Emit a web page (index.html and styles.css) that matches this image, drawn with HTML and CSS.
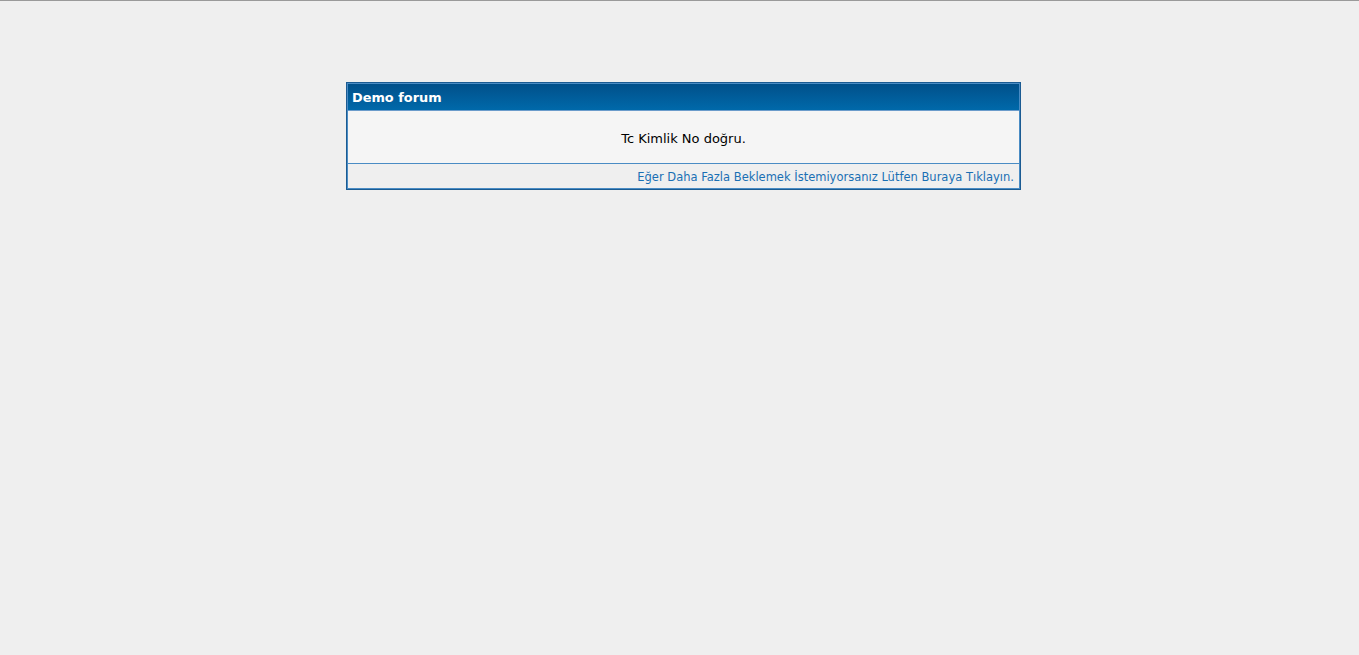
FILE: index.html
```html
<!DOCTYPE html>
<html lang="tr">
<head>
    <meta charset="UTF-8">
    <title>Demo forum</title>
    <link rel="stylesheet" href="styles.css">
</head>
<body>
    <div class="redirect-box">
        <div class="box-head">Demo forum</div>
        <div class="box-body">Tc Kimlik No doğru.</div>
        <div class="box-foot">
            <a href="#">Eğer Daha Fazla Beklemek İstemiyorsanız Lütfen Buraya Tıklayın.</a>
        </div>
    </div>
</body>
</html>
```

FILE: styles.css
```css
html, body {
    margin: 0;
    padding: 0;
}
body {
    background-color: #efefef;
    border-top: 1px solid #9a9a9a;
    font-family: Verdana, "DejaVu Sans", sans-serif;
    min-height: 654px;
}
.redirect-box {
    width: 671px;
    margin: 81px 0 0 346px;
    border: 1px solid #1b5b92;
    padding: 1px;
    background-color: #4a8cc4;
}
.box-head {
    height: 26px;
    line-height: 28px;
    padding-left: 4px;
    color: #fff;
    font-weight: bold;
    font-size: 12.9px;
    background: linear-gradient(#01508a, #0069aa);
}
.box-body {
    background-color: #f5f5f5;
    height: 52px;
    line-height: 56px;
    text-align: center;
    font-size: 13px;
    color: #000;
    margin-bottom: 1px;
    border-top: 1px solid #6c9ccb;
}
.box-foot {
    background-color: #efefef;
    height: 24px;
    line-height: 26px;
    text-align: right;
    padding-right: 5px;
    font-size: 11.5px;
}
.box-foot a {
    color: #1a6fb4;
    text-decoration: none;
}
```
